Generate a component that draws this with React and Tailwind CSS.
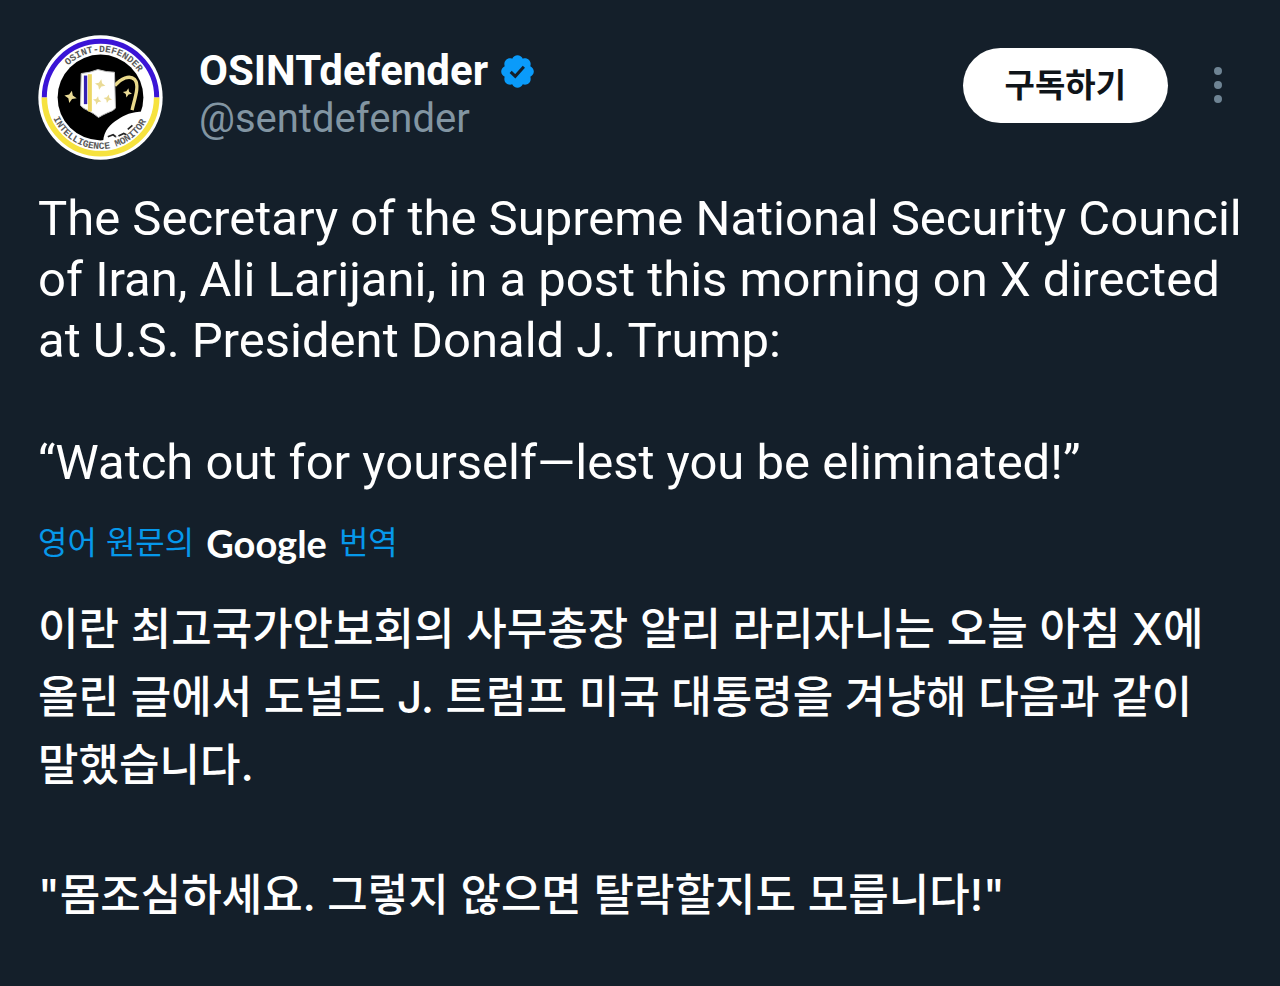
import { MoreVertical } from 'lucide-react';

const post = {
  name: 'OSINTdefender',
  handle: '@sentdefender',
  original: [
    'The Secretary of the Supreme National Security Council of Iran, Ali Larijani, in a post this morning on X directed at U.S. President Donald J. Trump:',
    '“Watch out for yourself—lest you be eliminated!”',
  ],
  translated: [
    '이란 최고국가안보회의 사무총장 알리 라리자니는 오늘 아침 X에 올린 글에서 도널드 J. 트럼프 미국 대통령을 겨냥해 다음과 같이 말했습니다.',
    '"몸조심하세요. 그렇지 않으면 탈락할지도 모릅니다!"',
  ],
};

const stars = [
  { x: 118, y: 200, r: 19 },
  { x: 289, y: 188, r: 14 },
  { x: 207, y: 163, r: 16 },
  { x: 198, y: 211, r: 13 },
  { x: 230, y: 206, r: 13 },
];

function Avatar() {
  return (
    <svg viewBox="20 14 376 376" className="size-[125px] shrink-0" role="img" aria-label="OSINTdefender">
      <defs>
        <path id="ring-top" d="M71 202a137 137 0 0 1 274 0" />
        <path id="ring-bottom" d="M53 202a155 155 0 0 0 310 0" />
      </defs>
      <circle cx="208" cy="202" r="187" fill="#fff" />
      <path d="M39 202a169 169 0 0 1 338 0" fill="none" stroke="#3a14d6" strokeWidth="15" />
      <path d="M39 202a169 169 0 0 0 338 0" fill="none" stroke="#f6e23e" strokeWidth="17" />
      <circle cx="208" cy="202" r="129" fill="#000" />

      {/* satellite and beam */}
      <path d="M216 334c2-34 22-52 44-66 22-15 40-22 78-24l-22 36 10 10-40 34-30-4-16 14z" fill="#fff" />
      <path d="M230 320l16-6 8 6M262 318l16-8 8 4M290 298l14-12" fill="none" stroke="#222" strokeWidth="5" />
      <path d="M251 166c18-20 44-34 60-18 16 18-2 62-8 92" fill="none" stroke="#e9d98a" strokeWidth="10" />

      {/* shield */}
      <path d="M150 130q26-2 50-12 26 8 50 8l3 108q-6 8-24 14-14 6-27 14-14-12-30-20-16-6-24-16z" fill="#fff" stroke="#bdbdbd" strokeWidth="3" />
      <path d="M163 136v86" stroke="#3420b4" strokeWidth="10" />
      <path d="M176 132v112" stroke="#ecd763" strokeWidth="12" />
      {stars.map((s) => (
        <path
          key={`${s.x}-${s.y}`}
          d="M0-10L3-3 10 0 3 3 0 10-3 3-10 0-3-3z"
          transform={`translate(${s.x} ${s.y}) rotate(12) scale(${s.r / 10})`}
          fill="#eadb96"
        />
      ))}

      <g fill="#5a5a5a" fontFamily="Liberation Mono, monospace" fontSize="29" fontWeight="700" textAnchor="middle">
        <text><textPath href="#ring-top" startOffset="53%">OSINT-DEFENDER</textPath></text>
        <text><textPath href="#ring-bottom" startOffset="49%">INTELLIGENCE MONITOR</textPath></text>
      </g>
    </svg>
  );
}

function VerifiedBadge() {
  return (
    <svg viewBox="1 1 22 22" className="size-[35px] shrink-0" role="img" aria-label="인증된 계정">
      <path
        d="M22.25 12c0-1.43-.88-2.67-2.19-3.34.46-1.39.2-2.9-.81-3.91s-2.52-1.27-3.91-.81c-.66-1.31-1.91-2.19-3.34-2.19s-2.67.88-3.33 2.19c-1.4-.46-2.91-.2-3.92.81s-1.26 2.52-.8 3.91c-1.31.67-2.2 1.91-2.2 3.34s.89 2.67 2.2 3.34c-.46 1.39-.21 2.9.8 3.91s2.52 1.26 3.91.81c.67 1.31 1.91 2.19 3.34 2.19s2.68-.88 3.34-2.19c1.39.45 2.9.2 3.91-.81s1.27-2.52.81-3.91c1.31-.67 2.19-1.91 2.19-3.34z"
        fill="#0a9bfa"
      />
      <path d="M7.7 12.2l2.9 2.8 5.4-6" fill="none" stroke="#141f2a" strokeWidth="1.9" />
    </svg>
  );
}

export default function App() {
  return (
    <main className="min-h-screen bg-[#141f2a] px-[38px] pt-[35px] pb-10 text-white font-[Roboto,'Noto_Sans_CJK_KR',sans-serif]">
      <header className="flex items-start">
        <Avatar />
        <div className="ml-9 mt-3 flex-1">
          <div className="flex items-center gap-3">
            <a href="#profile" className="text-[42px] leading-12 font-bold">{post.name}</a>
            <VerifiedBadge />
          </div>
          <a href="#profile" className="block text-[40px] leading-12 text-[#8295a2]">{post.handle}</a>
        </div>
        <button className="mt-[13px] h-[75px] rounded-full bg-white px-[42px] text-[33px] font-bold text-[#0f1419]">구독하기</button>
        <button aria-label="더 보기" className="mt-[26px] ml-[26px] text-[#6f8494]">
          <MoreVertical size={48} />
        </button>
      </header>

      <div className="mt-7 flex flex-col gap-[61px] text-[49px] leading-[61px]">
        {post.original.map((p) => <p key={p}>{p}</p>)}
      </div>

      <p className="mt-[26px] mb-7 flex h-12 items-center text-[32px] text-[#0698ea] font-[Inter,'Noto_Sans_CJK_KR',sans-serif]">
        영어 원문의
        <span className="mx-3 font-[Lato] text-[38px] font-bold">
          <span className="text-white">Google</span>
        </span>
        번역
      </p>

      <div className="flex flex-col gap-[62px] text-[44px] leading-[68px] font-medium break-keep font-[Inter,'Noto_Sans_CJK_KR',sans-serif]">
        {post.translated.map((p) => <p key={p}>{p}</p>)}
      </div>
    </main>
  );
}
